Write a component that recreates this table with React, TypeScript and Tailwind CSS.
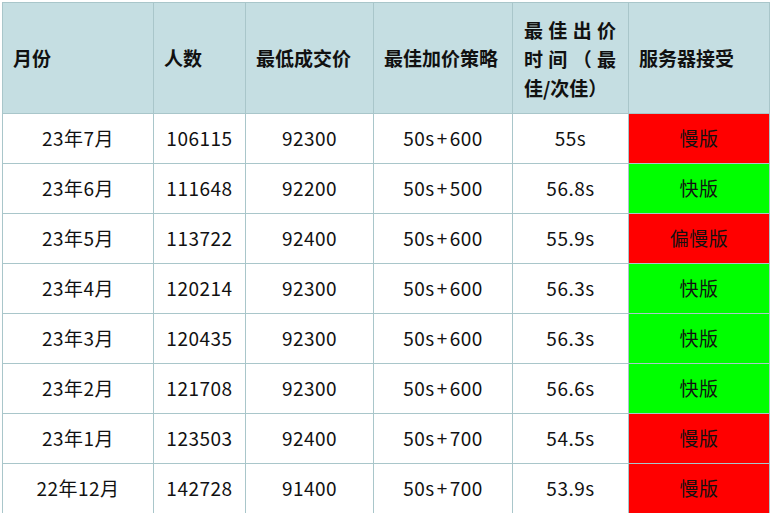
const rows: { month: string; count: string; low: string; plan: string; time: string; server: string; fast: boolean }[] = [
  { month: "23年7月", count: "106115", low: "92300", plan: "50s+600", time: "55s", server: "慢版", fast: false },
  { month: "23年6月", count: "111648", low: "92200", plan: "50s+500", time: "56.8s", server: "快版", fast: true },
  { month: "23年5月", count: "113722", low: "92400", plan: "50s+600", time: "55.9s", server: "偏慢版", fast: false },
  { month: "23年4月", count: "120214", low: "92300", plan: "50s+600", time: "56.3s", server: "快版", fast: true },
  { month: "23年3月", count: "120435", low: "92300", plan: "50s+600", time: "56.3s", server: "快版", fast: true },
  { month: "23年2月", count: "121708", low: "92300", plan: "50s+600", time: "56.6s", server: "快版", fast: true },
  { month: "23年1月", count: "123503", low: "92400", plan: "50s+700", time: "54.5s", server: "慢版", fast: false },
  { month: "22年12月", count: "142728", low: "91400", plan: "50s+700", time: "53.9s", server: "慢版", fast: false },
]

const th = "border border-[#a9c6ca] bg-[#c5dee2] px-[10px] text-left align-middle font-bold text-[19px] text-[#111]"
const td = "border border-[#a9c6ca] h-[50px] text-center align-middle text-[19px] tracking-[0.5px] text-[#111]"

export default function App() {
  return (
    <main className="bg-white w-[770px] h-[513px] overflow-hidden pl-[2px] pt-[2px]" style={{ fontFamily: '"Noto Sans CJK SC", "Noto Sans", sans-serif' }}>
      <table className="table-fixed border-collapse w-[767px]">
        <colgroup>
          <col className="w-[151px]" />
          <col className="w-[92px]" />
          <col className="w-[128px]" />
          <col className="w-[139px]" />
          <col className="w-[116px]" />
          <col className="w-[141px]" />
        </colgroup>
        <thead>
          <tr className="h-[111px]">
            <th className={th}>月份</th>
            <th className={th}>人数</th>
            <th className={th}>最低成交价</th>
            <th className={th}>最佳加价策略</th>
            <th className={th + " leading-[29px] pl-[11px] pr-[12px]"}>
              <div className="text-justify">最佳出价时间（最佳/次佳）</div>
            </th>
            <th className={th}>服务器接受</th>
          </tr>
        </thead>
        <tbody>
          {rows.map((r) => {
            const [a, b] = r.plan.split("+")
            return (
              <tr key={r.month}>
                <td className={td}>{r.month}</td>
                <td className={td}>{r.count}</td>
                <td className={td}>{r.low}</td>
                <td className={td}>
                  {a}
                  <span className="mx-[2px]">+</span>
                  {b}
                </td>
                <td className={td}>{r.time}</td>
                <td className={td + (r.fast ? " bg-[#00ff00]" : " bg-[#ff0000]")}>{r.server}</td>
              </tr>
            )
          })}
        </tbody>
      </table>
    </main>
  )
}
